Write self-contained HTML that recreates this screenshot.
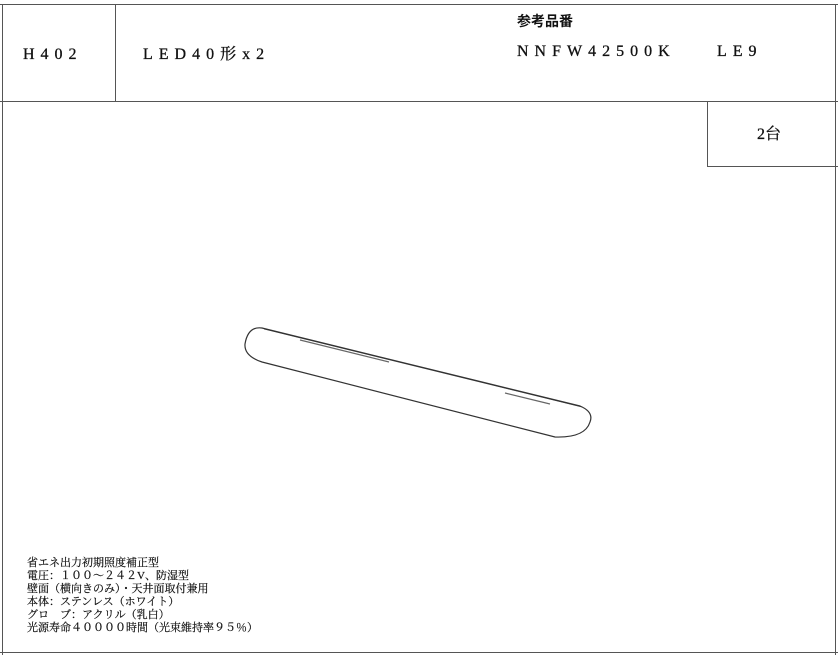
<!DOCTYPE html>
<html><head><meta charset="utf-8"><style>
body{margin:0;width:838px;height:655px;background:#fff;position:relative;overflow:hidden;font-family:"Liberation Serif","Noto Serif CJK SC",serif;color:#111}
.l{position:absolute;background:#555}
.t{position:absolute;white-space:nowrap;font-size:16px;letter-spacing:6px;line-height:18px;-webkit-text-stroke:0.3px #111}
.s{position:absolute;font-size:11px;line-height:13px;font-family:"Liberation Serif","Noto Serif CJK SC",serif;color:#111;-webkit-text-stroke:0.2px #111}
</style></head><body>
<div class="l" style="left:0;top:4px;width:838px;height:1px"></div>
<div class="l" style="left:2px;top:4px;width:1px;height:651px"></div>
<div class="l" style="left:835px;top:4px;width:1px;height:651px"></div>
<div class="l" style="left:0;top:101px;width:838px;height:1px"></div>
<div class="l" style="left:115px;top:4px;width:1px;height:97px"></div>
<div class="l" style="left:707px;top:101px;width:1px;height:66px"></div>
<div class="l" style="left:707px;top:166px;width:131px;height:1px"></div>
<div class="l" style="left:0;top:652px;width:838px;height:1px"></div>
<div class="t" style="left:23px;top:46px">H402</div>
<div class="t" style="left:143px;top:46px">LED40形x2</div>
<div class="t" style="left:517px;top:12px;font-size:14px;letter-spacing:0;font-family:'Liberation Sans','Noto Sans CJK JP',sans-serif;font-weight:bold;-webkit-text-stroke:0">参考品番</div>
<div class="t" style="left:517px;top:43px">NNFW42500K</div>
<div class="t" style="left:717px;top:43px">LE9</div>
<div class="t" style="left:757px;top:126px;letter-spacing:0">2台</div>
<svg style="position:absolute;left:0;top:0" width="838" height="655">
<g fill="none" stroke="#333" stroke-width="1.2">
<path d="M262 328 L580 406 Q594 412 590 422 Q585 438 555 437 L262 362 Q244 356 245 344 Q248 326 262 328 Z"/>
<path d="M264 329 L582 407" stroke-width="0.8"/>
<path d="M300 340 L389 362" stroke="#666"/>
<path d="M505 393 L550 404" stroke="#666"/>
</g></svg>
<div class="s" style="left:27px;top:557px">省エネ出力初期照度補正型<br>電圧：１００～２４２V、防湿型<br>壁面（横向きのみ）・天井面取付兼用<br>本体：ステンレス（ホワイト）<br>グロ　ブ：アクリル（乳白）<br>光源寿命４００００時間（光束維持率９５％）</div>
</body></html>
